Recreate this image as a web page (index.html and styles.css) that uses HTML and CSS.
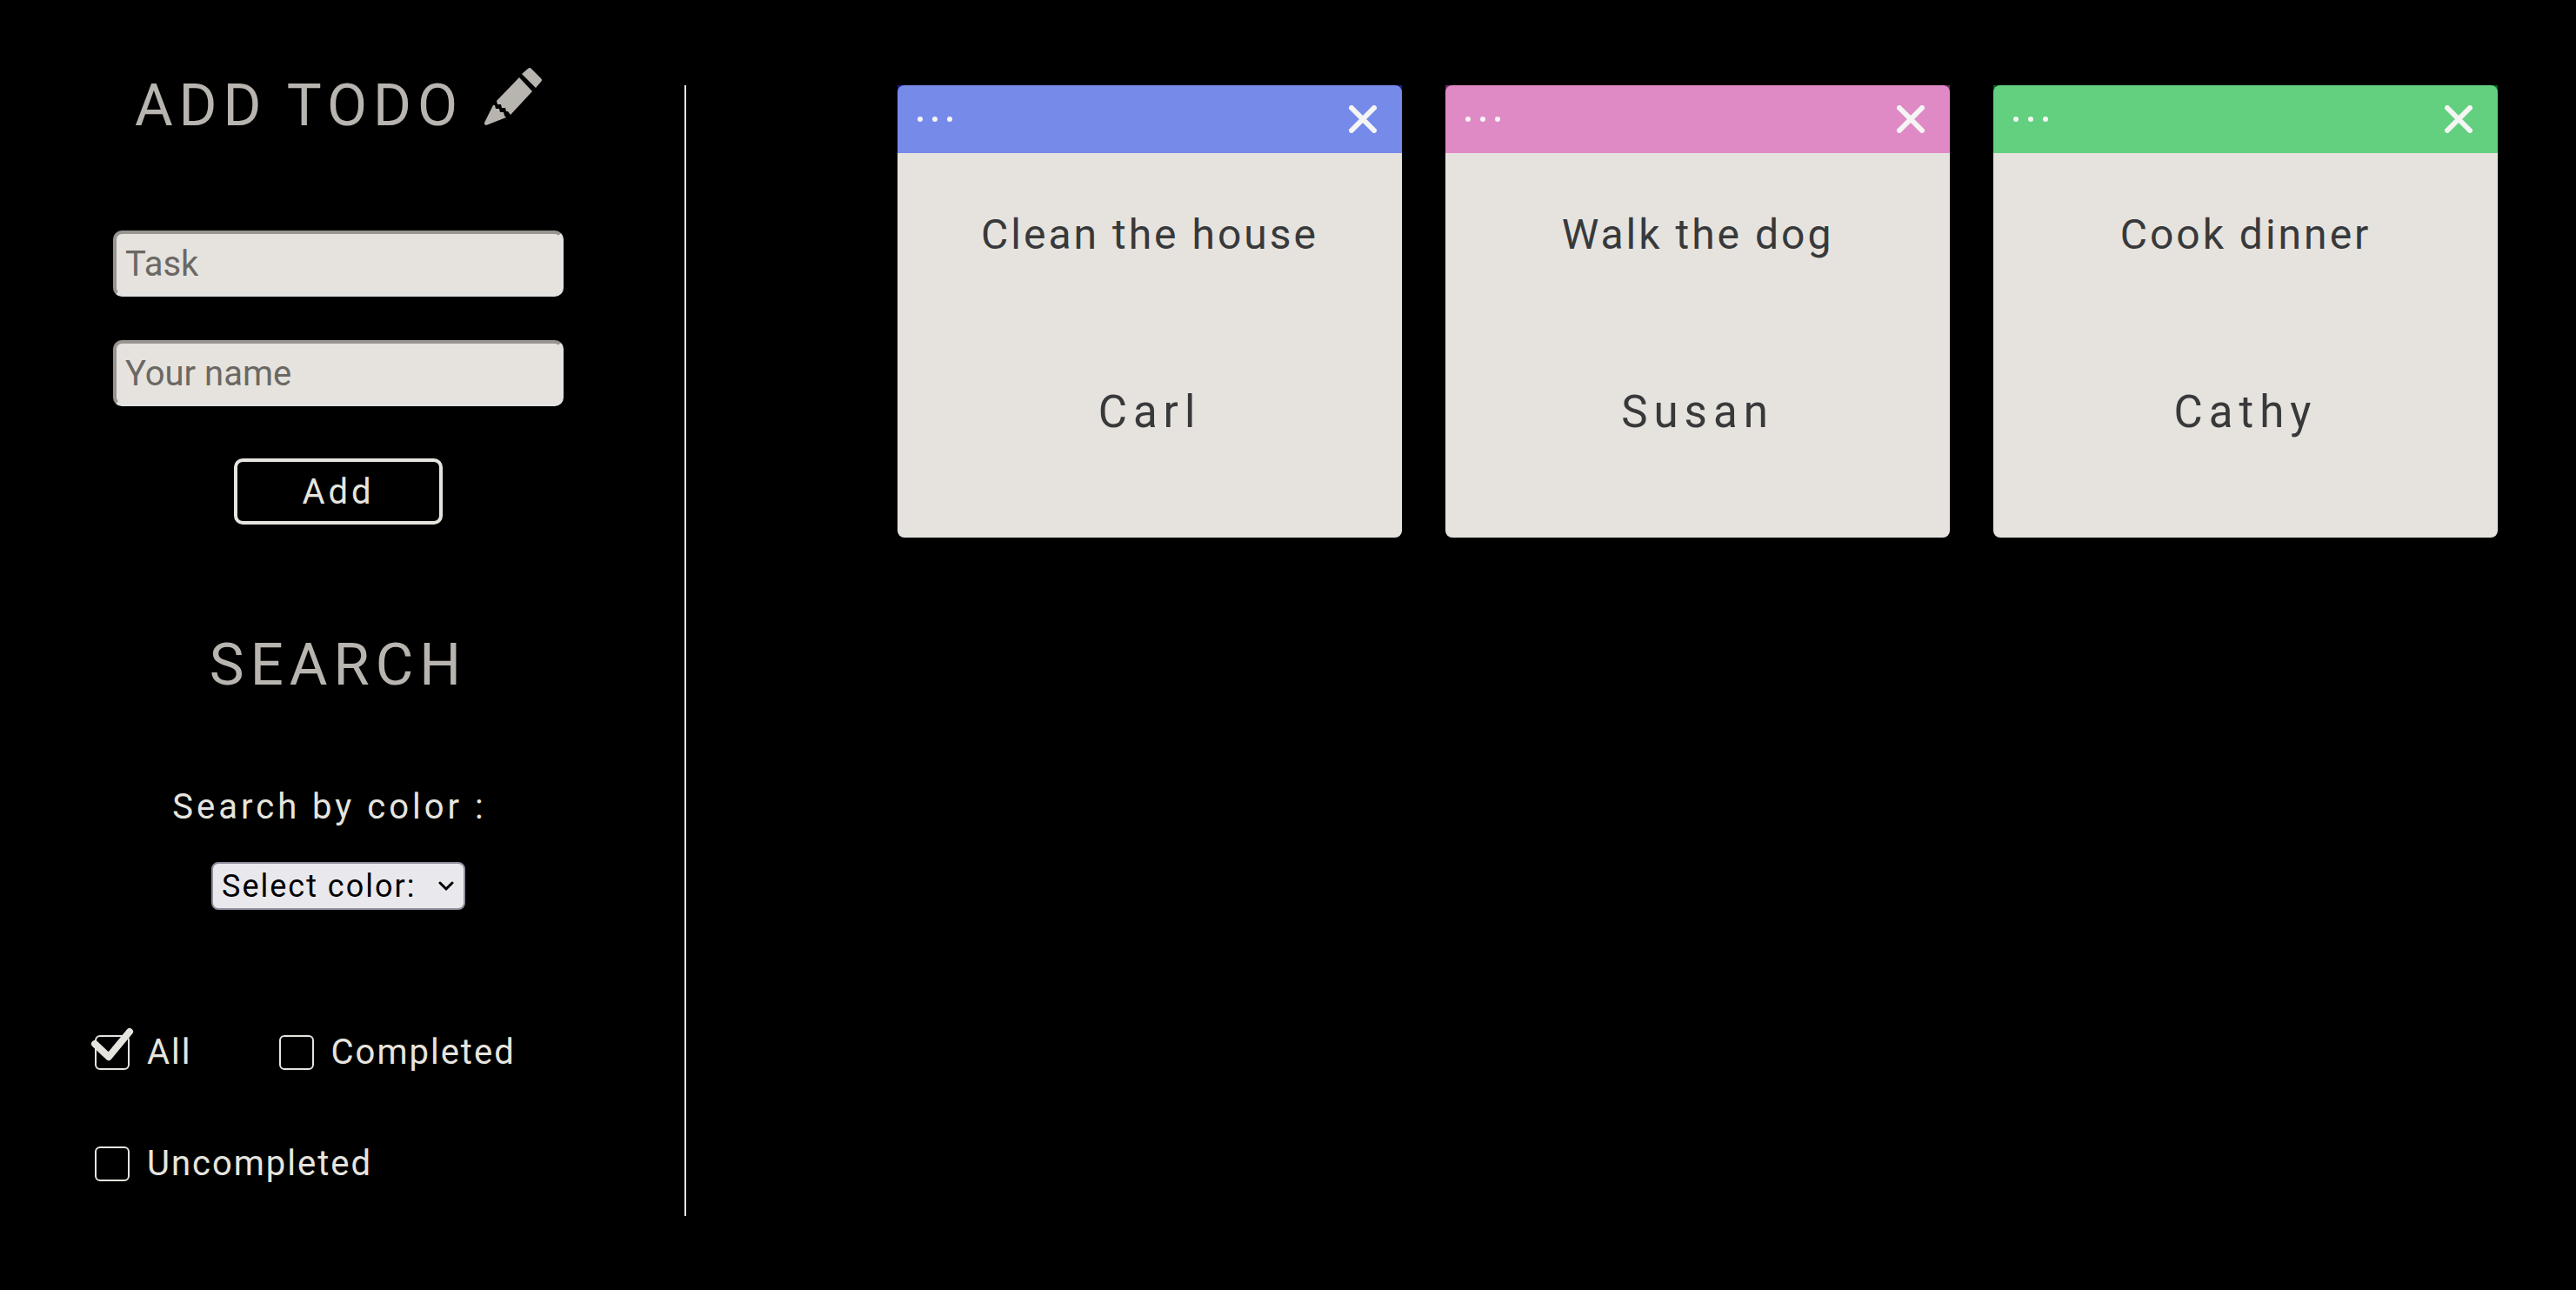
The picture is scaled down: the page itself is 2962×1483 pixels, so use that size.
FILE: index.html
```html
<!DOCTYPE html>
<html lang="en">
<head>
<meta charset="utf-8">
<title>Todo list</title>
<meta name="viewport" content="width=device-width, initial-scale=1">
<link rel="stylesheet" href="styles.css">
</head>
<body>
<div class="app">
  <aside class="sidebar">
    <h1 class="heading">ADD TODO
      <svg class="pencil" viewBox="0 0 66 66" aria-hidden="true">
        <path d="M43 7 50 1Q52 -1 54 1L65 12Q67 14 65 16L59 23Z"/>
        <path d="M40 11 55 27 30 54 27 50 25 50 24 46 20 46 19 42 15 42 14 38Z"/>
        <path d="M10 43 12 43 13 47 17 47 18 51 22 51 23 55 25 57 2 66Q0 66 0 63Z"/>
      </svg>
    </h1>
    <form class="add-form">
      <input class="field" type="text" placeholder="Task" aria-label="Task">
      <input class="field" type="text" placeholder="Your name" aria-label="Your name">
      <button class="add-button" type="button">Add</button>
    </form>
    <h2 class="heading heading-search">SEARCH</h2>
    <form class="search-form">
      <label class="color-label" for="color">Search by color :</label>
      <div class="select-wrap">
        <select class="color-select" id="color">
          <option>Select color:</option>
          <option>Blue</option>
          <option>Pink</option>
          <option>Green</option>
        </select>
        <svg class="caret" viewBox="0 0 18 12" aria-hidden="true"><path d="M2 2 9 9 16 2"/></svg>
      </div>
      <div class="filters">
        <label class="filter"><input class="check" type="checkbox" checked><svg class="tick" viewBox="0 0 48 38" aria-hidden="true"><path d="M4 18 20 33 44 4"/></svg>All</label>
        <label class="filter"><input class="check" type="checkbox"><svg class="tick" viewBox="0 0 48 38" aria-hidden="true"><path d="M4 18 20 33 44 4"/></svg>Completed</label>
        <label class="filter"><input class="check" type="checkbox"><svg class="tick" viewBox="0 0 48 38" aria-hidden="true"><path d="M4 18 20 33 44 4"/></svg>Uncompleted</label>
      </div>
    </form>
  </aside>
  <main class="cards">
    <article class="card blue">
      <header class="card-bar">
        <button class="icon-button" type="button" aria-label="Change color"><svg class="dots" viewBox="0 0 40 6"><circle cx="3" cy="3" r="3"/><circle cx="20" cy="3" r="3"/><circle cx="37" cy="3" r="3"/></svg></button>
        <button class="icon-button" type="button" aria-label="Delete"><svg class="close" viewBox="0 0 32 32"><path d="M3 3 29 29M29 3 3 29"/></svg></button>
      </header>
      <p class="task">Clean the house</p>
      <p class="person">Carl</p>
    </article>
    <article class="card pink">
      <header class="card-bar">
        <button class="icon-button" type="button" aria-label="Change color"><svg class="dots" viewBox="0 0 40 6"><circle cx="3" cy="3" r="3"/><circle cx="20" cy="3" r="3"/><circle cx="37" cy="3" r="3"/></svg></button>
        <button class="icon-button" type="button" aria-label="Delete"><svg class="close" viewBox="0 0 32 32"><path d="M3 3 29 29M29 3 3 29"/></svg></button>
      </header>
      <p class="task">Walk the dog</p>
      <p class="person">Susan</p>
    </article>
    <article class="card green">
      <header class="card-bar">
        <button class="icon-button" type="button" aria-label="Change color"><svg class="dots" viewBox="0 0 40 6"><circle cx="3" cy="3" r="3"/><circle cx="20" cy="3" r="3"/><circle cx="37" cy="3" r="3"/></svg></button>
        <button class="icon-button" type="button" aria-label="Delete"><svg class="close" viewBox="0 0 32 32"><path d="M3 3 29 29M29 3 3 29"/></svg></button>
      </header>
      <p class="task">Cook dinner</p>
      <p class="person">Cathy</p>
    </article>
  </main>
</div>
</body>
</html>
```
FILE: styles.css
```css
* {
  box-sizing: border-box;
}

body {
  margin: 0;
  background: #000;
  color: #e6e4df;
  font-family: Roboto, "Liberation Sans", sans-serif;
  font-size: 40px;
  line-height: 48px;
}

.app {
  display: flex;
  min-height: 100vh;
}

.sidebar {
  flex: none;
  width: 778px;
  padding-top: 78px;
}

.heading {
  display: flex;
  justify-content: center;
  align-items: flex-start;
  gap: 24px;
  margin: 0;
  color: #b8b5b0;
  font-size: 67px;
  font-weight: 450;
  line-height: 86px;
  letter-spacing: 7px;
}

.heading-search {
  margin-top: 118px;
}

.pencil {
  width: 66px;
  height: 66px;
  fill: currentColor;
}

.add-form {
  display: flex;
  flex-direction: column;
  align-items: center;
  margin-top: 101px;
}

.field {
  width: 518px;
  height: 76px;
  margin-bottom: 50px;
  padding: 0 10px;
  border: 4px solid;
  border-color: #989590 #e3e3e3 #e3e3e3 #989590;
  border-radius: 10px;
  background: #e6e3de;
  color: #333;
  font: inherit;
}

.field::placeholder {
  color: #6b6864;
}

.add-button {
  width: 240px;
  height: 76px;
  margin-top: 10px;
  padding: 2px 0 0;
  border: 4px solid #e6e4df;
  border-radius: 10px;
  background: #000;
  color: #e6e4df;
  font: inherit;
  letter-spacing: 4px;
}

.search-form {
  display: flex;
  flex-direction: column;
  align-items: center;
  margin-top: 97px;
}

.color-label {
  padding-right: 20px;
  letter-spacing: 4px;
}

.select-wrap {
  position: relative;
  margin-top: 39px;
}

.color-select {
  display: block;
  width: 292px;
  height: 55px;
  padding: 0 10px;
  appearance: none;
  border: 2px solid #8f8f9d;
  border-radius: 8px;
  background: #e9e9ed;
  color: #000;
  font: inherit;
  font-size: 36px;
  letter-spacing: 2px;
}

.caret {
  position: absolute;
  top: 22px;
  right: 13px;
  width: 18px;
  height: 12px;
  fill: none;
  stroke: #000;
  stroke-width: 3;
  stroke-linecap: round;
  pointer-events: none;
}

.filters {
  display: flex;
  flex-wrap: wrap;
  align-self: stretch;
  gap: 80px 100px;
  margin-top: 140px;
  padding-left: 109px;
}

.filter {
  display: flex;
  position: relative;
  align-items: center;
  gap: 20px;
  letter-spacing: 2px;
}

.check {
  width: 40px;
  height: 40px;
  margin: 0;
  appearance: none;
  border: 2px solid #e6e4df;
  border-radius: 6px;
}

.tick {
  display: none;
  position: absolute;
  top: -4px;
  left: -4px;
  width: 48px;
  height: 38px;
  overflow: visible;
  fill: none;
  stroke: #e6e4df;
  stroke-width: 8;
  stroke-linecap: round;
  stroke-linejoin: round;
}

.check:checked + .tick {
  display: block;
}

.cards {
  display: grid;
  flex: 1;
  grid-template-columns: repeat(auto-fill, minmax(500px, 1fr));
  align-content: start;
  gap: 50px;
  position: relative;
  padding: 98px 90px 85px 254px;
}

.cards::before {
  content: "";
  position: absolute;
  top: 98px;
  bottom: 85px;
  left: 9px;
  width: 2px;
  background: #e6e4df;
}

.card {
  min-height: 520px;
  border-radius: 0 0 8px 8px;
  background: linear-gradient(var(--corner) 8px, #e6e3de 8px);
  color: #38393b;
  font-weight: 450;
  text-align: center;
}

.card-bar {
  display: flex;
  align-items: center;
  justify-content: space-between;
  height: 78px;
  padding: 0 29px 0 23px;
  border-radius: 8px 8px 0 0;
  background: var(--bar);
}

.blue {
  --bar: #768aea;
  --corner: #1c1c8a;
}

.pink {
  --bar: #df8ac5;
  --corner: #6b2a5a;
}

.green {
  --bar: #62d07e;
  --corner: #0a5c24;
}

.icon-button {
  display: flex;
  padding: 0;
  border: 0;
  background: none;
}

.dots {
  width: 40px;
  height: 6px;
  fill: #f5f5f5;
}

.close {
  width: 32px;
  height: 32px;
  fill: none;
  stroke: #f5f5f5;
  stroke-width: 6;
  stroke-linecap: round;
}

.task {
  margin: 66px 0 0;
  font-size: 48px;
  line-height: 56px;
  letter-spacing: 3px;
}

.person {
  margin: 148px 0 0;
  font-size: 51px;
  line-height: 56px;
  letter-spacing: 7px;
}
```
